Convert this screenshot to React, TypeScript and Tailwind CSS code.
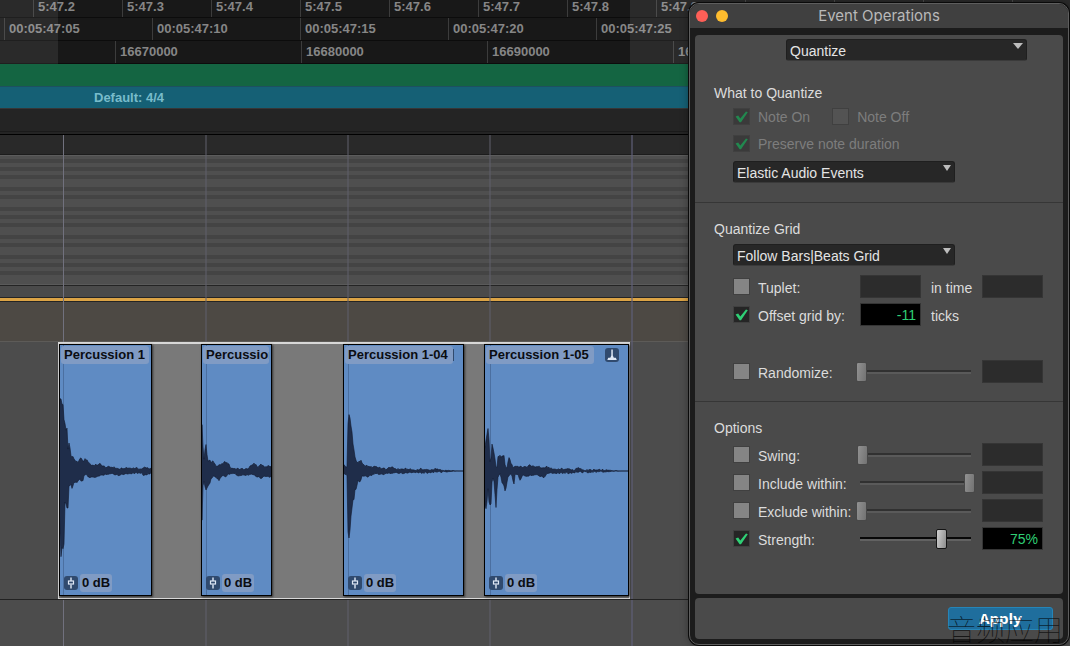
import React from "react";

type Point = [number, number];

type ClipData = {
  name: string;
  place: string;
  label: string;
  width: number;
  gridX: number;
  badge?: "full" | "edge";
  upper: Point[];
  lower: Point[];
};

const CLIP_HEIGHT = 252;
const MID = 127;

const clips: ClipData[] = [
  {
    name: "Percussion 1",
    place: "w-[93px]",
    label: "w-[88px]",
    width: 93,
    gridX: 4,
    upper: [[0, 62], [1, 71], [2, 71], [3, 66], [4, 66], [5, 50], [6, 46], [7, 40], [8, 42], [9, 21], [10, 28], [11, 22], [12, 14], [14, 13], [16, 10], [19, 7], [22, 13], [24, 8], [26, 11], [29, 9], [32, 5], [37, 5], [41, 6], [46, 3], [54, 3], [60, 1], [68, 2], [76, 2], [83, 1], [86, 3], [93, 1]],
    lower: [[0, 30], [1, 62], [2, 85], [3, 76], [4, 76], [5, 72], [6, 30], [7, 32], [8, 36], [9, 36], [10, 14], [12, 12], [13, 17], [15, 10], [18, 10], [21, 7], [22, 10], [24, 9], [25, 3], [28, 3], [30, 6], [36, 5], [41, 4], [47, 2], [54, 2], [59, 3], [66, 2], [74, 1], [81, 1], [85, 3], [93, 1]],
  },
  {
    name: "Percussion 1-02",
    place: "ml-[49px] w-[71px]",
    label: "w-[66px]",
    width: 71,
    gridX: 5,
    upper: [[0, 20], [1, 45], [2, 23], [3, 11], [4, 21], [5, 25], [6, 15], [7, 9], [9, 10], [10, 8], [12, 9], [15, 4], [20, 5], [23, 8], [27, 7], [30, 2], [38, 1], [46, 1], [50, 4], [53, 7], [57, 3], [60, 6], [63, 3], [68, 4], [71, 3]],
    lower: [[0, 20], [1, 49], [2, 14], [3, 10], [5, 18], [7, 14], [9, 11], [10, 7], [12, 4], [15, 5], [18, 8], [21, 4], [24, 5], [28, 2], [34, 2], [38, 4], [45, 3], [50, 2], [54, 4], [58, 5], [60, 6], [64, 4], [68, 5], [71, 4]],
  },
  {
    name: "Percussion 1-04",
    place: "ml-[71px] w-[121px]",
    label: "w-[108px]",
    width: 121,
    gridX: 5,
    badge: "edge",
    upper: [[0, 3], [1, 5], [3, 3], [4, 4], [5, 46], [6, 55], [7, 52], [8, 44], [9, 38], [10, 27], [11, 20], [12, 13], [14, 7], [16, 9], [18, 9], [20, 5], [24, 4], [29, 3], [32, 4], [37, 2], [44, 1], [47, 3], [54, 1], [64, 1], [72, 0], [78, 1], [86, 0], [92, 1], [100, 0], [121, 0]],
    lower: [[0, 2], [3, 3], [4, 3], [5, 60], [6, 66], [7, 58], [8, 44], [9, 36], [10, 28], [11, 27], [12, 17], [13, 18], [15, 8], [17, 10], [19, 4], [24, 5], [29, 3], [33, 2], [38, 2], [41, 3], [44, 1], [54, 1], [62, 1], [72, 0], [80, 1], [90, 0], [121, 0]],
  },
  {
    name: "Percussion 1-05",
    place: "ml-5 w-[145px]",
    label: "w-[108px]",
    width: 145,
    gridX: 6,
    badge: "full",
    upper: [[0, 20], [1, 23], [2, 30], [3, 36], [4, 42], [5, 30], [6, 8], [7, 12], [8, 26], [9, 22], [10, 18], [11, 11], [12, 3], [13, 3], [14, 13], [16, 15], [17, 13], [20, 14], [21, 5], [23, 2], [25, 13], [27, 7], [29, 3], [32, 4], [38, 3], [42, 3], [46, 5], [50, 3], [54, 4], [58, 2], [64, 3], [68, 1], [78, 1], [86, 1], [90, 0], [94, 2], [100, 0], [145, 0]],
    lower: [[0, 18], [1, 34], [2, 37], [3, 30], [4, 16], [5, 30], [6, 33], [7, 32], [8, 10], [9, 6], [10, 10], [11, 22], [12, 35], [13, 18], [14, 5], [16, 1], [18, 10], [20, 14], [21, 19], [22, 17], [24, 5], [26, 2], [28, 4], [30, 13], [31, 3], [34, 3], [36, 8], [39, 3], [42, 5], [46, 3], [52, 3], [56, 4], [60, 5], [64, 1], [72, 1], [84, 1], [96, 0], [145, 0]],
  },
];

function level(points: Point[], x: number) {
  for (let i = 1; i < points.length; i++) {
    const [x0, y0] = points[i - 1];
    const [x1, y1] = points[i];
    if (x <= x1) return y0 + ((y1 - y0) * (x - x0)) / (x1 - x0);
  }
  return points[points.length - 1][1];
}

function ripple(x: number, seed: number) {
  const v = Math.sin(x * 12.9898 + seed * 78.233) * 43758.5453;
  return (v - Math.floor(v)) * 1.8;
}

function wavePath(clip: ClipData) {
  const top: string[] = [];
  const bottom: string[] = [];
  const end = clip.width;
  for (let x = 0; x <= end; x++) {
    const fade = clip.width > 100 ? Math.max(0, Math.min(1, (end * 0.95 - x) / 20)) : 1;
    const up = level(clip.upper, x) + ripple(x, 1) * fade;
    const down = level(clip.lower, x) + ripple(x, 2) * fade;
    top.push(`${x},${(MID - up).toFixed(1)}`);
    bottom.unshift(`${x},${(MID + down).toFixed(1)}`);
  }
  return `M${top.join("L")}L${bottom.join("L")}Z`;
}

function FaderIcon() {
  return (
    <span className="flex size-[14px] items-center justify-center rounded-[3px] bg-[#304a6e]">
      <svg viewBox="0 0 14 14" className="size-[14px]" fill="none" stroke="#dfe8f5">
        <path d="M7 1.5V5M7 8.5V12.5" strokeWidth="1.4" />
        <rect x="4.5" y="5" width="5" height="3" strokeWidth="1.2" />
      </svg>
    </span>
  );
}

function PendulumIcon() {
  return (
    <svg viewBox="0 0 14 14" className="size-[14px] rounded-[3px] bg-[#304a6e]">
      <path d="M6.3 1.5h1.5v6l1 2.2h2l1 2.3H2.3l1-2.3h2l1-2.2z" fill="#dfe8f5" />
    </svg>
  );
}

function Clip({ clip }: { clip: ClipData }) {
  return (
    <article
      className={`relative flex h-[252px] shrink-0 flex-col justify-between overflow-hidden border border-black bg-[#5f8bc3] shadow-[1px_1px_2px_#333] ${clip.place}`}
    >
      <svg
        className="absolute -left-px -top-px h-[252px] w-[calc(100%+2px)]"
        viewBox={`0 0 ${clip.width} ${CLIP_HEIGHT}`}
        aria-hidden="true"
      >
        <path d={`M${clip.gridX + 0.5} 0V${CLIP_HEIGHT}`} stroke="#4b6fa0" strokeWidth="1" />
        <path d={wavePath(clip)} fill="#1f2d4a" stroke="#10182b" strokeWidth="0.6" />
      </svg>
      <header className="relative flex items-center pl-px pt-px">
        <h3 className={`h-[18px] shrink-0 overflow-hidden whitespace-nowrap rounded-[3px] bg-[#809bc4] pl-[3px] text-[13px] font-bold leading-[18px] text-[#0b0d12] ${clip.label}`}>
          {clip.name}
        </h3>
        {clip.badge === "edge" && <span className="h-3 w-px bg-[#304a6e]" />}
        {clip.badge === "full" && (
          <span className="ml-auto mr-[9px]">
            <PendulumIcon />
          </span>
        )}
      </header>
      <footer className="relative flex items-center gap-[2px] pb-[3px] pl-[4px]">
        <FaderIcon />
        <span className="h-[18px] rounded-[3px] bg-[#809bc4] px-[2px] text-[13px] font-bold leading-[18px] text-[#0b0d12]">
          0 dB
        </span>
      </footer>
    </article>
  );
}

function Ruler({ labels, cell, row }: { labels: string[]; cell: string; row: string }) {
  return (
    <div className={`flex overflow-hidden border-b border-[#0c0c0c] text-[13px] font-bold text-[#868686] ${row}`}>
      {labels.map((label) => (
        <span key={label} className={`shrink-0 border-l border-[#3c3c3c] pl-1 ${cell}`}>
          {label}
        </span>
      ))}
    </div>
  );
}

const octaveRows = [
  "h-[3px]", "h-1", "h-1", "h-1", "h-1", "h-1", "h-2", "h-1", "h-1", "h-1", "h-2", "h-1", "h-1", "h-1",
  "h-1", "h-1", "h-2", "h-1", "h-1", "h-1", "h-2", "h-1", "h-1", "h-1", "h-1", "h-1", "h-[9px]",
];

const gridLines = [
  "border-l border-[#71717e]",
  "border-l-2 border-[#5f5f6c]/50",
  "border-l-2 border-[#5f5f6c]/50",
  "border-l-2 border-[#5f5f6c]/50",
  "border-l-2 border-[#5f5f78]/60",
];

function Timeline() {
  return (
    <main className="flex min-h-screen flex-col overflow-hidden bg-[#4c4c4c]">
      <section className="relative bg-[#181818]">
        <Ruler
          row="h-[18px] pl-[33px] leading-[13px]"
          cell="w-[89px]"
          labels={["5:47.2", "5:47.3", "5:47.4", "5:47.5", "5:47.6", "5:47.7", "5:47.8", "5:47.9", "5:48.0", "5:48.1", "5:48.2", "5:48.3"]}
        />
        <Ruler
          row="h-[23px] pl-[4px] leading-[22px]"
          cell="w-[148px]"
          labels={["00:05:47:05", "00:05:47:10", "00:05:47:15", "00:05:47:20", "00:05:47:25", "00:05:48:00"]}
        />
        <Ruler
          row="h-[23px] pl-[115px] leading-[22px]"
          cell="w-[186px]"
          labels={["16670000", "16680000", "16690000", "16700000", "16710000"]}
        />
        <span className="absolute inset-y-0 left-0 w-[58px] bg-white/8" />
        <span className="absolute inset-y-0 left-[630px] right-0 bg-white/8" />
      </section>
      <div className="h-[23px] border-b border-[#1d5060] bg-[#146542]" />
      <div className="h-[21px] bg-[#156075] pl-[94px] text-[13px] font-bold leading-[21px] text-[#78bccb]">
        Default: 4/4
      </div>
      <div className="h-6 border-b border-t border-b-[#1a1a1a] border-t-[#363636] bg-[#242424]" />
      <div className="h-[3px] border-b border-black bg-[#242424]" />

      <section className="relative flex flex-1 flex-col">
        <div className="h-[20px] border-b border-[#1c1c1c] bg-[#292929]" />
        <div className="h-px bg-[#5c5c5c]" />
        <div className="border-b border-[#5a5a5a]">
          {octaveRows.map((height, i) => (
            <div key={i} className={`${height} ${i % 2 ? "bg-[#444444]" : "bg-[#4f4f4f]"}`} />
          ))}
        </div>
        <div className="h-[13px] border-b border-t border-[#242424] bg-[#4a4a4a]" />
        <div className="h-1 border-b border-[#242424] bg-[#dba345]" />
        <div className="h-[40px] border-b border-[#5d5b58] bg-[#4d4944]" />
        <div className="absolute inset-0 flex pl-[63px]" aria-hidden="true">
          {gridLines.map((line, i) => (
            <span key={i} className={`w-[142px] shrink-0 ${line}`} />
          ))}
        </div>
        <div className="relative border-b border-[#222] pl-[58px]">
          <div className="flex w-[572px] border border-t-2 border-[#d8d8d8] bg-[#797979] pb-[2px]">
            {clips.map((clip) => (
              <Clip key={clip.name} clip={clip} />
            ))}
          </div>
        </div>
      </section>
    </main>
  );
}

function CheckRow({ label, checked, disabled, className = "" }: { label: string; checked?: boolean; disabled?: boolean; className?: string }) {
  return (
    <label className={`flex items-center gap-2 whitespace-nowrap ${disabled ? "text-[#7d7d7d]" : ""} ${className}`}>
      <span className="relative flex size-[17px] shrink-0">
        <input
          type="checkbox"
          defaultChecked={checked}
          disabled={disabled}
          className="peer size-[17px] appearance-none border border-[#404040] bg-[#858585] checked:bg-[#252525] disabled:bg-[#535353] disabled:checked:bg-[#3a3a3a]"
        />
        <svg viewBox="0 0 17 17" className="pointer-events-none absolute inset-0 hidden size-[17px] peer-checked:block" aria-hidden="true">
          <path d="M2.6 8.4 5.2 7.6 7.3 10.6 13 3.6 14.8 4.2 8 14.2H6.6z" fill={disabled ? "#22884f" : "#2fcf75"} />
        </svg>
      </span>
      <span className="pt-[2px]">{label}</span>
    </label>
  );
}

function Dropdown({ label, value, className, arrow }: { label: string; value: string; className: string; arrow: string }) {
  return (
    <div className={`relative h-[22px] ${className}`}>
      <select
        aria-label={label}
        defaultValue={value}
        className="h-[22px] w-full appearance-none rounded-[3px] border border-[#1f1f1f] border-b-[#3a3a3a] bg-[#272727] pl-[3px] pt-[2px] text-[14px] leading-[18px] text-[#e4e4e4]"
      >
        <option>{value}</option>
      </select>
      <svg viewBox="0 0 10 6" className={`pointer-events-none absolute top-[4px] h-[6px] ${arrow}`} preserveAspectRatio="none" aria-hidden="true">
        <path d="M0 0h10L5 6z" fill="#bdbdbd" />
      </svg>
    </div>
  );
}

function Field({ label, value = "" }: { label: string; value?: string }) {
  return (
    <input
      type="text"
      aria-label={label}
      defaultValue={value}
      className={`h-[23px] w-[61px] border border-[#353535] pr-1 text-right text-[14px] leading-5 text-[#2fcf75] ${value ? "bg-black" : "bg-[#2c2c2c]"}`}
    />
  );
}

function Slider({ label, value, active }: { label: string; value: number; active?: boolean }) {
  const tone = active
    ? "[&::-webkit-slider-runnable-track]:bg-[linear-gradient(#080808_50%,#626262_50%)] [&::-webkit-slider-thumb]:border-[#151515] [&::-webkit-slider-thumb]:bg-[linear-gradient(100deg,#d0d0d0,#8c8c8c)]"
    : "[&::-webkit-slider-runnable-track]:bg-[linear-gradient(#313131_50%,#5a5a5a_50%)] [&::-webkit-slider-thumb]:border-[#484848] [&::-webkit-slider-thumb]:bg-[linear-gradient(100deg,#929292,#727272)]";
  return (
    <input
      type="range"
      aria-label={label}
      defaultValue={value}
      className={`-ml-[4px] h-5 w-[119px] shrink-0 appearance-none bg-transparent [&::-webkit-slider-runnable-track]:h-5 [&::-webkit-slider-runnable-track]:bg-[length:111px_4px] [&::-webkit-slider-runnable-track]:bg-center [&::-webkit-slider-runnable-track]:bg-no-repeat [&::-webkit-slider-thumb]:h-5 [&::-webkit-slider-thumb]:w-[11px] [&::-webkit-slider-thumb]:appearance-none [&::-webkit-slider-thumb]:rounded-[2px] [&::-webkit-slider-thumb]:border ${tone}`}
    />
  );
}

function SettingRow({ label, checked, children, value, className = "" }: { label: string; checked?: boolean; children?: React.ReactNode; value?: string | null; className?: string }) {
  return (
    <div className={`grid h-[23px] grid-cols-[127px_122px_61px] items-center pl-[38px] ${className}`}>
      <CheckRow label={label} checked={checked} />
      <div className="flex items-center gap-[10px] whitespace-nowrap">{children}</div>
      {value !== null && <Field label={`${label} amount`} value={value} />}
    </div>
  );
}

function EventOperations() {
  return (
    <section
      aria-label="Event Operations"
      className="absolute right-px top-[3px] w-[380px] overflow-hidden rounded-[10px] border border-[#5e5e5e] bg-[#1c1c1c] text-[14px] leading-5 text-[#dcdcdc] shadow-[0_0_0_1px_#0a0a0a,0_0_8px_#00000066]"
    >
      <header className="grid h-6 grid-cols-[44px_1fr_44px] items-center bg-[#404040]">
        <div className="flex gap-2 pl-[6px]">
          <button type="button" aria-label="Close" className="size-3 rounded-full bg-[#fe5f57]" />
          <button type="button" aria-label="Minimize" className="size-3 rounded-full bg-[#febc2e]" />
        </div>
        <h1 className="text-center font-['Inter',sans-serif] text-[15px] leading-[22px] text-[#b9b9b9]">Event Operations</h1>
      </header>

      <div className="mx-[5px] mt-[7px] rounded-[4px] bg-[#4a4a4a]">
        <section className="border-b border-[#363636] pb-[19px] pt-1">
          <Dropdown label="Operation" value="Quantize" className="ml-[91px] w-[241px]" arrow="right-[4px] w-[10px]" />
          <h2 className="mt-[22px] pl-[19px]">What to Quantize</h2>
          <div className="mt-[2px] flex gap-[22px] pl-[38px]">
            <CheckRow label="Note On" checked disabled />
            <CheckRow label="Note Off" disabled />
          </div>
          <CheckRow label="Preserve note duration" checked disabled className="mt-[5px] pl-[38px]" />
          <Dropdown label="What to quantize" value="Elastic Audio Events" className="ml-[38px] mt-[7px] w-[222px]" arrow="right-[4px] w-[8px]" />
        </section>

        <section className="border-b border-[#363636] pb-[18px] pt-4">
          <h2 className="pl-[19px]">Quantize Grid</h2>
          <Dropdown label="Quantize grid" value="Follow Bars|Beats Grid" className="ml-[38px] mt-[5px] w-[222px]" arrow="right-[4px] w-[8px]" />
          <SettingRow label="Tuplet:" className="mt-[9px]">
            <Field label="Tuplet" />
            <span className="pt-[2px]">in time</span>
          </SettingRow>
          <SettingRow label="Offset grid by:" checked value={null} className="mt-[5px]">
            <Field label="Offset grid by" value="-11" />
            <span className="pt-[2px]">ticks</span>
          </SettingRow>
          <SettingRow label="Randomize:" className="mt-[34px]">
            <Slider label="Randomize" value={0} />
          </SettingRow>
        </section>

        <section className="flex flex-col gap-[5px] pb-[44px] pt-4">
          <h2 className="pl-[19px]">Options</h2>
          <SettingRow label="Swing:">
            <Slider label="Swing" value={1} />
          </SettingRow>
          <SettingRow label="Include within:">
            <Slider label="Include within" value={100} />
          </SettingRow>
          <SettingRow label="Exclude within:">
            <Slider label="Exclude within" value={0} />
          </SettingRow>
          <SettingRow label="Strength:" checked value="75%">
            <Slider label="Strength" value={74} active />
          </SettingRow>
        </section>
      </div>

      <footer className="mx-[5px] mb-[5px] mt-1 flex h-[41px] justify-end rounded-[4px] bg-[#4a4a4a] pr-[10px] pt-[9px]">
        <button
          type="button"
          className="h-[23px] w-[105px] rounded-[3px] border border-[#2585b8] bg-[#1f6e9d] font-['Open_Sans',sans-serif] text-[15px] font-bold leading-[21px] text-white"
        >
          Apply
        </button>
      </footer>
    </section>
  );
}

export default function App() {
  return (
    <div className="relative overflow-hidden font-['Liberation_Sans',Arial,sans-serif]">
      <Timeline />
      <EventOperations />
      <span
        lang="zh"
        className="pointer-events-none absolute bottom-[2px] right-[7px] whitespace-nowrap font-['Noto_Sans_CJK_SC',sans-serif] text-[29px] font-thin leading-[32px] text-black/70"
      >
        音频应用
      </span>
    </div>
  );
}
